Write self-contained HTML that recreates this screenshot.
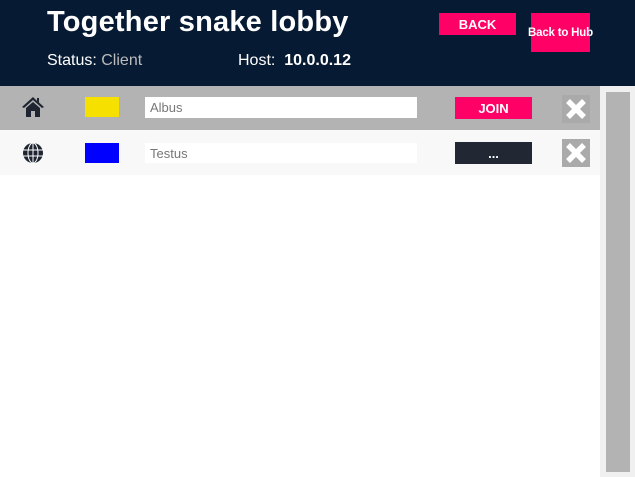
<!DOCTYPE html>
<html><head><style>
body{margin:0;width:635px;height:477px;background:#fff;font-family:"Liberation Sans",sans-serif;position:relative;overflow:hidden}
.a{position:absolute}
.hdr{left:0;top:0;width:635px;height:86px;background:#071a33}
.btn{background:#ff0066;color:#fff;font-weight:bold;font-size:13px;display:flex;align-items:center;justify-content:center;white-space:nowrap}
.inp{background:#fff;font-size:13px;color:#777;padding-left:5px;box-sizing:border-box;display:flex;align-items:center}
.x{background:#aaa}
</style></head><body>
<div class="a hdr"></div>
<div class="a" style="left:47px;top:6px;color:#fff;font-size:29px;font-weight:bold;letter-spacing:0.2px">Together snake lobby</div>
<div class="a" style="left:47px;top:52px;color:#fff;font-size:16px">Status: <span style="color:#bbb">Client</span></div>
<div class="a" style="left:238px;top:52px;color:#fff;font-size:16px">Host:&nbsp; <b>10.0.0.12</b></div>
<div class="a btn" style="left:439px;top:13px;width:77px;height:22px">BACK</div>
<div class="a btn" style="left:531px;top:13px;width:59px;height:39px;font-size:11.5px;letter-spacing:-0.2px">Back to Hub</div>
<div class="a" style="left:0;top:86px;width:600px;height:44px;background:#b3b3b3"></div>
<div class="a" style="left:0;top:130px;width:600px;height:45px;background:#f8f8f8"></div>
<svg class="a" style="left:21px;top:96px" width="24" height="22" viewBox="0 0 24 22"><path d="M12 1 L1 11 L3 12 L12 4 L21 12 L23 11 L18 6.5 V2 H16 V5 Z" fill="#1e2530"/><path d="M5 12 L12 6 L19 12 V21 H14 V15 H10 V21 H5 Z" fill="#1e2530"/></svg>
<svg class="a" style="left:22px;top:142px" width="22" height="22" viewBox="0 0 22 22"><circle cx="11" cy="11" r="10" fill="#1e2530"/><g stroke="#fff" stroke-width="1" fill="none"><path d="M1 8H21M1 14H21M11 1V21"/><ellipse cx="11" cy="11" rx="5" ry="10"/></g></svg>
<div class="a" style="left:85px;top:97px;width:34px;height:20px;background:#f5e000"></div>
<div class="a" style="left:85px;top:143px;width:34px;height:20px;background:#0000ff"></div>
<div class="a inp" style="left:145px;top:97px;width:272px;height:21px">Albus</div>
<div class="a inp" style="left:145px;top:143px;width:272px;height:20px">Testus</div>
<div class="a btn" style="left:455px;top:97px;width:77px;height:22px">JOIN</div>
<div class="a btn" style="left:455px;top:142px;width:77px;height:22px;background:#212833">...</div>
<svg class="a x" style="left:562px;top:95px" width="28" height="28" viewBox="0 0 28 28"><path d="M6 6L22 22M22 6L6 22" stroke="#fff" stroke-width="5.5"/></svg>
<svg class="a x" style="left:562px;top:139px" width="28" height="28" viewBox="0 0 28 28"><path d="M6 6L22 22M22 6L6 22" stroke="#fff" stroke-width="5.5"/></svg>
<div class="a" style="left:600px;top:86px;width:35px;height:391px;background:#f0f0f0"></div>
<div class="a" style="left:606px;top:92px;width:24px;height:380px;background:#b3b3b3"></div>
</body></html>
